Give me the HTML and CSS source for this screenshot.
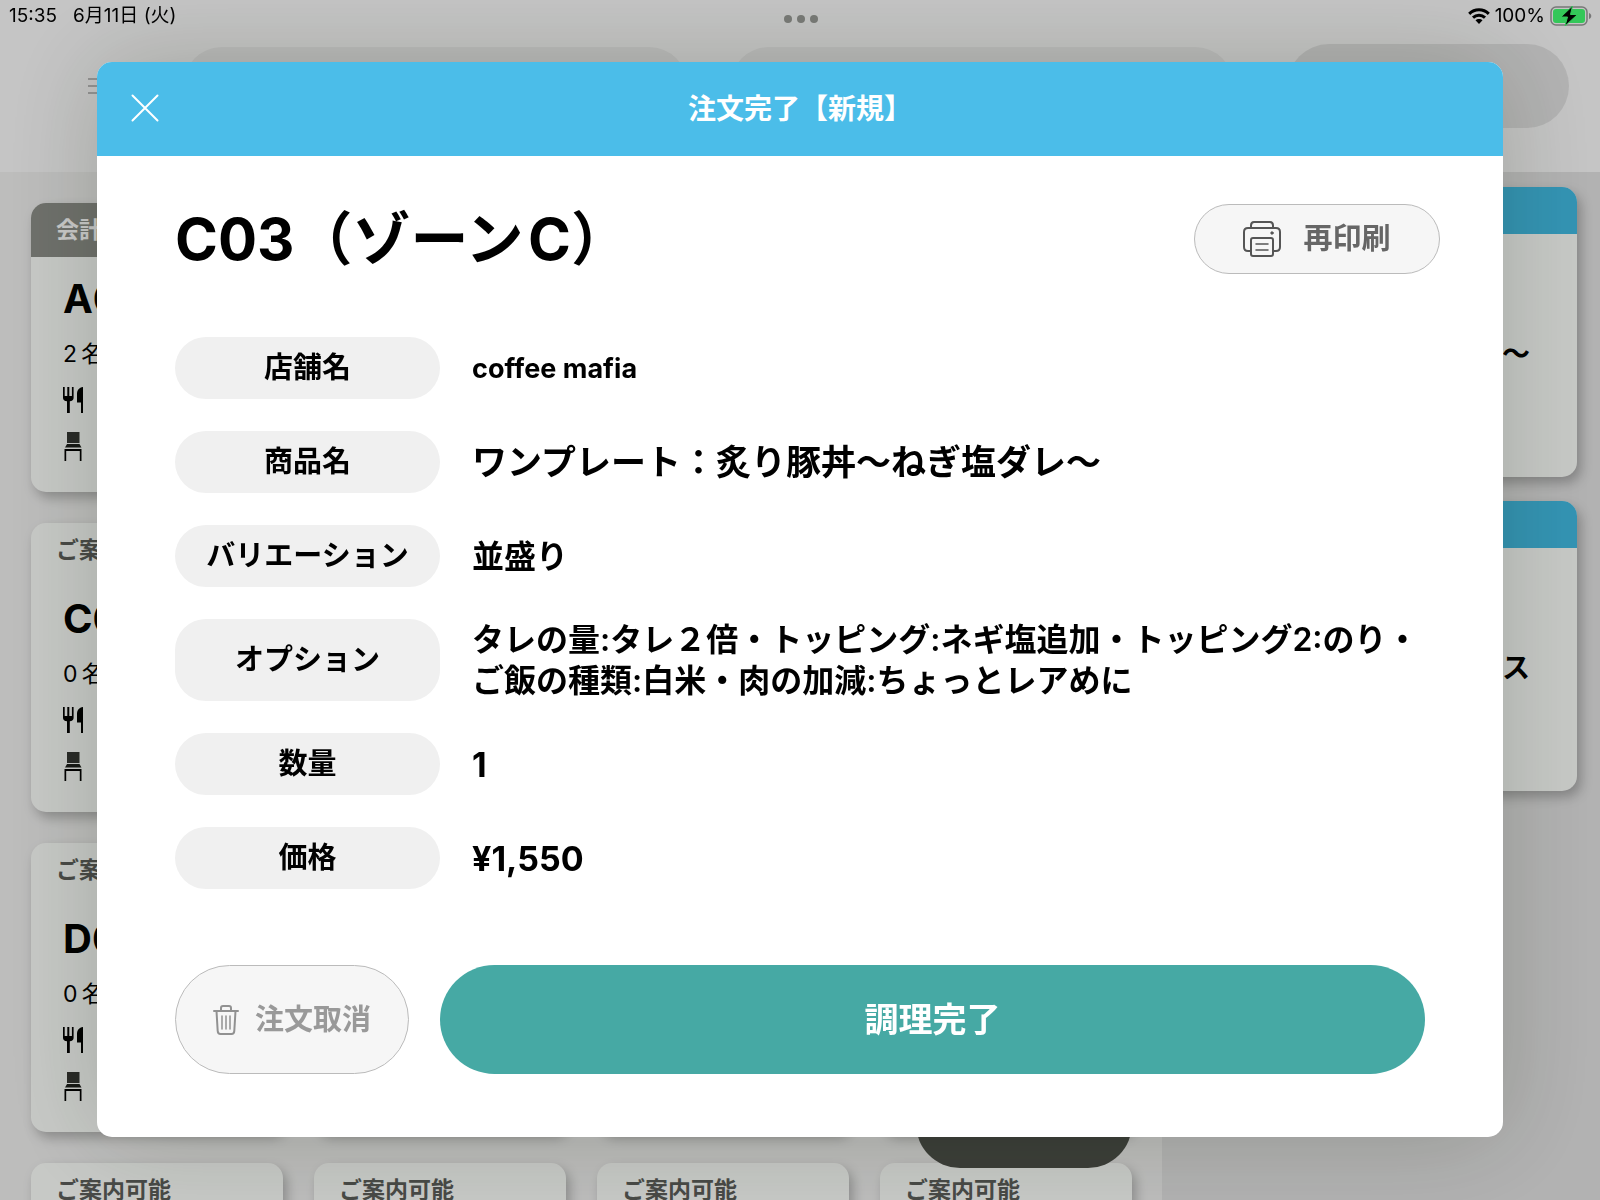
FILE: index.html
```html
<!DOCTYPE html>
<html lang="ja">
<head>
  <meta charset="UTF-8" />
  <meta name="viewport" content="width=device-width, initial-scale=1.0" />
  <title>注文完了【新規】</title>
  <link rel="stylesheet" href="styles.css">
</head>
<body>
  <!-- アイコン -->
  <svg class="defs" aria-hidden="true">
    <symbol id="icon-meal" viewBox="0 0 20 26">
      <path d="M0 0h1.700v9h2.600V0h2v9h2.600V0h1.700v11c0 2-1.500 3-3.800 3.200V26H4V14.200C1.500 14 0 13 0 11z" />
      <path d="M20 0v26h-2V15.500h-4V7c0-4 2-6.500 6-7z" />
    </symbol>
    <symbol id="icon-chair" viewBox="0 0 18 29">
      <path d="M3 0h12.500v11H3z" fill="#343632" />
      <path d="M3 12h12.500l2 3.500H1z" fill="#1c1e1a" />
      <path d="M.5 17h17v12h-1.700V19h-13.600v10H.5z" />
    </symbol>
  </svg>

  <div class="status-bar">
    <div class="status-left"><span>15:35</span><span>6月11日 (火)</span></div>
    <div class="status-dots"><i></i><i></i><i></i></div>
    <div class="status-right">
      <svg width="22" height="16" viewBox="0 0 22 16" fill="none" stroke="#000" stroke-width="3">
        <path d="M1.200 5.800C6.700.5 15.300.5 20.800 5.800" />
        <path d="M5 9.700C8.400 6.500 13.600 6.500 17 9.700" />
        <path d="M11 16l-3.500-3.700c1.900-1.800 5.100-1.800 7 0z" fill="#000" stroke="none" />
      </svg>
      <span>100%</span>
      <svg width="42" height="20" viewBox="0 0 42 20">
        <rect x="1" y="1" width="36" height="18" rx="5" fill="none" stroke="#777" stroke-width="1.500" />
        <rect x="3" y="3" width="32" height="14" rx="3" fill="#34c759" />
        <path d="M39 7c3 1 3 5 0 6z" fill="#777" />
        <path d="M22.500 0L11 11h6.500L15 20l12.500-11.500h-7z" fill="#000" stroke="#34c759" stroke-width="1" />
      </svg>
    </div>
  </div>

  <header class="top-bar">
    <button class="menu-btn" aria-label="メニュー"><i></i><i></i><i></i></button>
    <div class="tabs">
      <div class="tab"></div>
      <div class="tab"></div>
    </div>
    <div class="top-action"></div>
  </header>

  <main class="main">
    <section class="tables">
      <article class="card">
        <div class="card-head billing">会計</div>
        <h2>A0</h2>
        <p>2&#8201;名</p>
        <svg class="meal"><use href="#icon-meal" /></svg>
        <svg class="chair"><use href="#icon-chair" /></svg>
      </article>
      <article class="card"></article>
      <article class="card"></article>
      <article class="card"></article>

      <article class="card">
        <div class="card-head">ご案</div>
        <h2>C0</h2>
        <p>0&#8201;名</p>
        <svg class="meal"><use href="#icon-meal" /></svg>
        <svg class="chair"><use href="#icon-chair" /></svg>
      </article>
      <article class="card"></article>
      <article class="card"></article>
      <article class="card"></article>

      <article class="card">
        <div class="card-head">ご案</div>
        <h2>D0</h2>
        <p>0&#8201;名</p>
        <svg class="meal"><use href="#icon-meal" /></svg>
        <svg class="chair"><use href="#icon-chair" /></svg>
      </article>
      <article class="card"></article>
      <article class="card"></article>
      <article class="card"></article>

      <article class="card"><div class="card-head">ご案内可能</div></article>
      <article class="card"><div class="card-head">ご案内可能</div></article>
      <article class="card"><div class="card-head">ご案内可能</div></article>
      <article class="card"><div class="card-head">ご案内可能</div></article>
    </section>

    <aside class="orders">
      <article class="order"><div class="order-head"></div><p>〜</p></article>
      <article class="order"><div class="order-head"></div><p>ス</p></article>
    </aside>
  </main>
  <div class="floating"></div>

  <!-- 注文モーダル -->
  <div class="overlay">
    <div class="modal" role="dialog" aria-labelledby="modal-title">
      <div class="modal-header">
        <button class="close-btn" aria-label="閉じる">
          <svg width="28" height="28" viewBox="0 0 28 28" stroke="#fff" stroke-width="2" stroke-linecap="round">
            <path d="M1.500 1.500l25 25M26.500 1.500l-25 25" />
          </svg>
        </button>
        <h1 id="modal-title">注文完了【新規】</h1>
      </div>

      <div class="modal-body">
        <div class="table-row">
          <h2>C03（ゾーン&#8202;C）</h2>
          <button class="print-btn">
            <svg width="38" height="36" viewBox="0 0 38 36" fill="none" stroke="#555" stroke-width="2" stroke-linecap="round" stroke-linejoin="round">
              <path d="M8 7V4.500C8 2.500 9 1 11 1h16c2 0 3 1.500 3 3.500V7" />
              <path d="M8 30H5c-2.500 0-4-1.500-4-4V11c0-2.500 1.500-4 4-4h28c2.500 0 4 1.500 4 4v15c0 2.500-1.500 4-4 4h-3" />
              <rect x="8" y="17" width="22" height="18" rx="2" />
              <path d="M13 23h12M13 29h12" stroke-width="1.500" />
              <circle cx="29" cy="12" r="1.200" fill="#555" stroke-width="1" />
            </svg>
            再印刷
          </button>
        </div>

        <dl class="details">
          <div class="detail"><dt>店舗名</dt><dd class="shop">coffee mafia</dd></div>
          <div class="detail"><dt>商品名</dt><dd class="item">ワンプレート：炙り豚丼〜ねぎ塩ダレ〜</dd></div>
          <div class="detail"><dt>バリエーション</dt><dd>並盛り</dd></div>
          <div class="detail"><dt>オプション</dt><dd>タレの量:タレ２倍・トッピング:ネギ塩追加・トッピング2:のり・<br>ご飯の種類:白米・肉の加減:ちょっとレアめに</dd></div>
          <div class="detail"><dt>数量</dt><dd class="number">1</dd></div>
          <div class="detail"><dt>価格</dt><dd class="number">¥1,550</dd></div>
        </dl>

        <div class="actions">
          <button class="cancel-btn">
            <svg width="26" height="30" viewBox="0 0 26 30" fill="none" stroke="#919191" stroke-width="2" stroke-linecap="round" stroke-linejoin="round">
              <path d="M1 6h24M8 6V3c0-1 .5-2 2-2h6c1.500 0 2 1 2 2v3" />
              <path d="M3.500 6l1.200 20c.1 1.800 1 3 2.800 3h11c1.800 0 2.700-1.200 2.800-3L22.500 6" />
              <path d="M9 11v13M13 11v13M17 11v13" stroke-width="1.500" />
            </svg>
            注文取消
          </button>
          <button class="done-btn">調理完了</button>
        </div>
      </div>
    </div>
  </div>
</body>
</html>
```

FILE: styles.css
```css
* {
  box-sizing: border-box;
  margin: 0;
  padding: 0;
}
body {
  height: 100vh;
  overflow: hidden;
  display: flex;
  flex-direction: column;
  font-family: Inter, "Noto Sans CJK JP", sans-serif;
  background: #fafafa;
  color: #000;
}
button {
  font-family: inherit;
  border: none;
  cursor: pointer;
}
.defs {
  position: absolute;
  width: 0;
  height: 0;
}

/* ステータスバー */
.status-bar {
  position: relative;
  z-index: 3;
  flex: none;
  height: 32px;
  padding: 0 8px 0 9px;
  display: grid;
  grid-template-columns: 1fr auto 1fr;
  align-items: center;
  font-size: 19px;
  line-height: 32px;
}
.status-left {
  display: flex;
  gap: 16px;
}
.status-right {
  display: flex;
  justify-content: flex-end;
  align-items: center;
  gap: 5px;
}
.status-dots {
  display: flex;
  gap: 5px;
  padding-top: 6px;
}
.status-dots i {
  width: 8px;
  height: 8px;
  border-radius: 50%;
  background: #757773;
}

/* 背景のヘッダー */
.top-bar {
  flex: none;
  height: 140px;
  padding: 0 31px 32px 88px;
  display: flex;
  align-items: center;
}
.menu-btn {
  width: 32px;
  margin-right: 63px;
  display: grid;
  gap: 5px;
  background: none;
}
.menu-btn i {
  height: 2px;
  background: #bbb;
}
.tabs {
  flex: 1;
  display: flex;
  gap: 42px;
}
.tab {
  flex: 1;
  height: 78px;
  border-radius: 39px;
  background: #ededed;
}
.top-action {
  width: 282px;
  height: 84px;
  margin-left: 53px;
  border-radius: 42px;
  background: #e3e3e3;
}

/* テーブル一覧 */
.main {
  flex: 1;
  min-height: 0;
  display: flex;
  overflow: hidden;
}
.tables {
  flex: 1;
  padding: 31px 30px 0 31px;
  display: grid;
  grid-template-columns: repeat(4, 1fr);
  grid-auto-rows: 289px;
  gap: 31px;
  background: #f0f0ef;
}
.card {
  overflow: hidden;
  border-radius: 15px;
  background: #fdfffc;
  box-shadow: 4px 6px 12px rgba(0,0,0,0.25);
}
.card-head {
  height: 54px;
  padding-left: 25px;
  font-size: 23px;
  font-weight: 600;
  line-height: 54px;
  color: #5c5e5a;
}
.card-head.billing {
  background: #8d8f89;
  color: #fff;
}
.card h2 {
  margin: 18px 0 15px 32px;
  font-size: 40px;
  line-height: 48px;
}
.card p {
  margin-left: 32px;
  font-size: 23px;
  font-weight: 400;
  line-height: 32px;
}
.card svg {
  display: block;
  margin-left: 32px;
}
.meal {
  width: 20px;
  height: 26px;
  margin-top: 17px;
}
.chair {
  width: 20px;
  height: 29px;
  margin-top: 19px;
}

/* 注文一覧 */
.orders {
  width: 438px;
  padding: 15px 23px 0 31px;
  display: flex;
  flex-direction: column;
  gap: 24px;
  background: #e2e2e2;
}
.order {
  flex: none;
  height: 290px;
  overflow: hidden;
  border-radius: 15px;
  background: #fdfffc;
  box-shadow: 4px 6px 12px rgba(0,0,0,0.25);
}
.order-head {
  height: 47px;
  background: #42bce4;
}
.order p {
  margin: 102px 47px 0 0;
  font-size: 28px;
  font-weight: 600;
  line-height: 36px;
  text-align: right;
}
.floating {
  position: fixed;
  right: 468px;
  bottom: 32px;
  width: 216px;
  height: 88px;
  border-radius: 44px;
  background: #4c4f49;
}

/* モーダル */
.overlay {
  position: fixed;
  inset: 0;
  z-index: 2;
  padding: 62px 97px 63px;
  background: rgba(0,0,0,0.21);
}
.modal {
  overflow: hidden;
  border-radius: 15px;
  background: #fff;
  box-shadow: 0 0 100px rgba(20,30,10,0.2);
}
.modal-header {
  position: relative;
  height: 94px;
  background: #4bbde9;
}
.modal-header h1 {
  font-size: 28px;
  font-weight: 600;
  line-height: 94px;
  text-align: center;
  color: #fff;
}
.close-btn {
  position: absolute;
  top: 32px;
  left: 34px;
  background: none;
}
.close-btn svg {
  display: block;
}
.modal-body {
  padding: 48px 63px 63px 78px;
}
.table-row {
  display: flex;
  justify-content: space-between;
  align-items: center;
  margin-bottom: 63px;
}
.table-row h2 {
  font-size: 58px;
  font-weight: 700;
  line-height: 70px;
}
.print-btn {
  width: 246px;
  height: 70px;
  display: flex;
  justify-content: center;
  align-items: center;
  gap: 22px;
  border: 1px solid #bbb;
  border-radius: 35px;
  background: #f6f6f6;
  font-size: 29px;
  font-weight: 600;
  line-height: 40px;
  color: #666;
}
.details {
  display: grid;
  gap: 32px;
}
.detail {
  display: grid;
  grid-template-columns: 265px 1fr;
  gap: 32px;
  min-height: 62px;
}
.detail dt {
  display: flex;
  justify-content: center;
  align-items: center;
  border-radius: 31px;
  background: #f0f0f0;
  font-size: 29px;
  font-weight: 600;
  line-height: 40px;
}
.detail dd {
  align-self: center;
  font-size: 32px;
  font-weight: 600;
  line-height: 41px;
  white-space: nowrap;
}
.detail dd.shop {
  font-size: 27px;
  font-weight: 700;
}
.detail dd.item {
  font-size: 35px;
}
.detail dd.number {
  font-size: 34px;
  font-weight: 700;
}
.actions {
  display: flex;
  gap: 31px;
  margin: 76px 15px 0 0;
}
.cancel-btn {
  width: 234px;
  height: 109px;
  display: flex;
  justify-content: center;
  align-items: center;
  gap: 16px;
  border: 1px solid #bbb;
  border-radius: 55px;
  background: #f6f6f6;
  font-size: 29px;
  font-weight: 600;
  line-height: 40px;
  color: #999;
}
.done-btn {
  flex: 1;
  border-radius: 55px;
  background: #46a9a4;
  font-size: 34px;
  font-weight: 600;
  line-height: 40px;
  color: #fff;
}
```
